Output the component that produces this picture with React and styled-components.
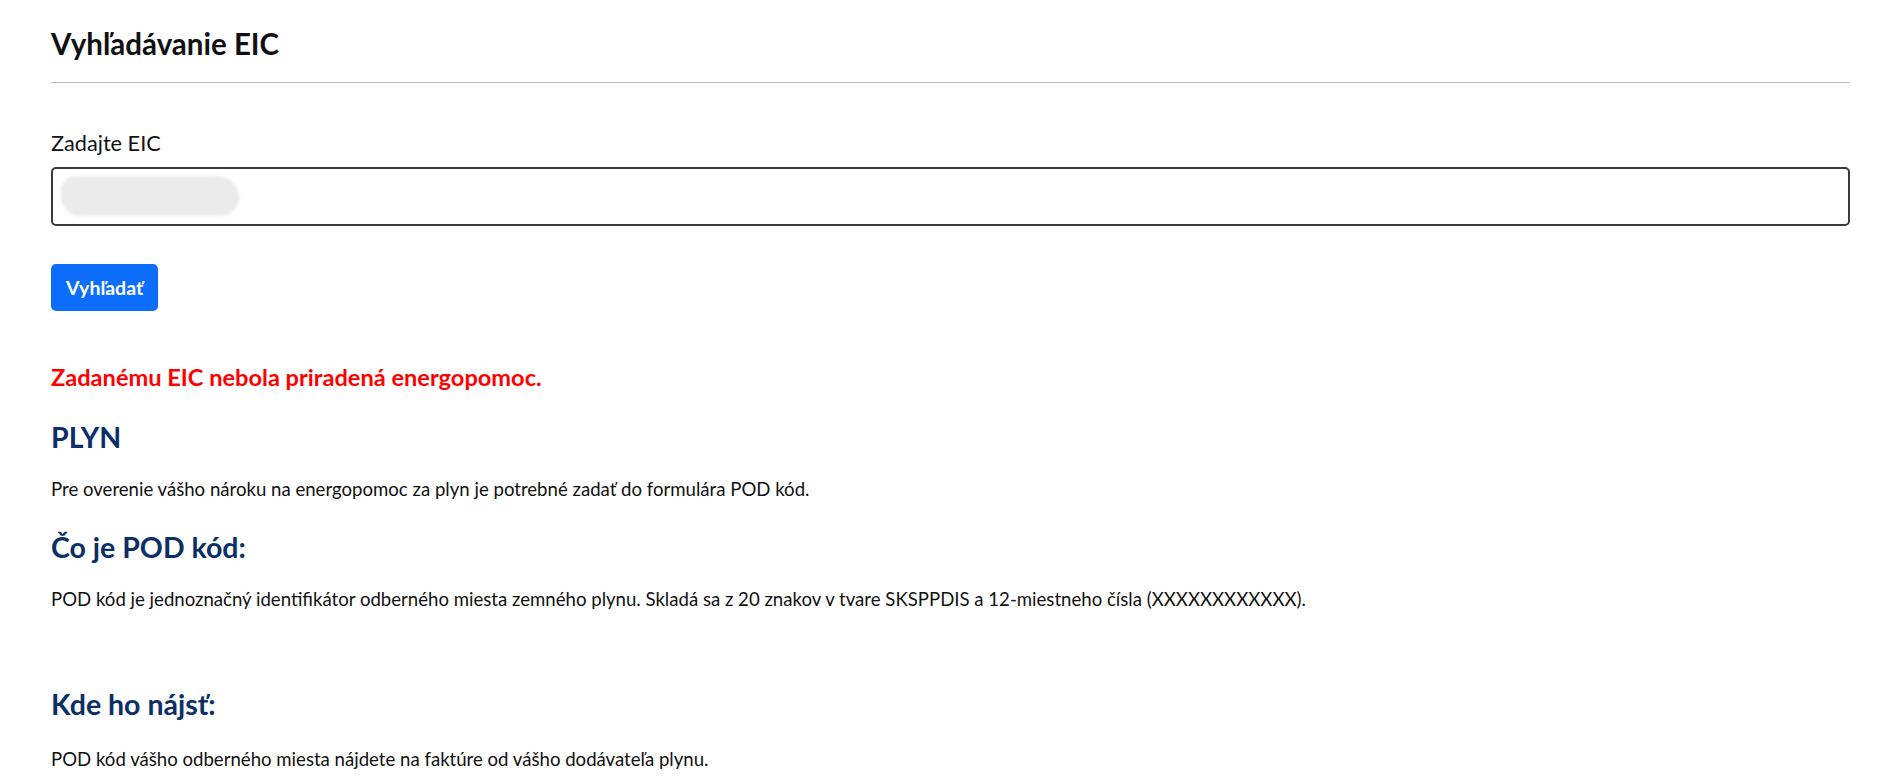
import React, { useState } from 'react'
import styled, { createGlobalStyle } from 'styled-components'

const GlobalStyle = createGlobalStyle`
  * { box-sizing: border-box; }
  body {
    margin: 0;
    background: #fff;
    font-family: Lato, "Open Sans", sans-serif;
    color: #111;
  }
`

const App = () => {

    const [eic, setEic] = useState('')

    const submitHandler = (e) => {
        e.preventDefault()
    }

    return (
        <Page>
            <GlobalStyle />
            <Title>Vyhľadávanie EIC</Title>
            <Divider />

            <form onSubmit={submitHandler}>
                <Label htmlFor="eic_field">Zadajte EIC</Label>
                <InputWrap>
                    <Input
                        id="eic_field"
                        type="text"
                        value={eic}
                        onChange={(e) => setEic(e.target.value)}
                    />
                    <Redacted />
                </InputWrap>

                <SearchButton type="submit">Vyhľadať</SearchButton>
            </form>

            <ErrorText>Zadanému EIC nebola priradená energopomoc.</ErrorText>

            <Heading>PLYN</Heading>
            <Text>Pre overenie vášho nároku na energopomoc za plyn je potrebné zadať do formulára POD kód.</Text>

            <Heading>Čo je POD kód:</Heading>
            <Text>POD kód je jednoznačný identifikátor odberného miesta zemného plynu. Skladá sa z 20 znakov v tvare SKSPPDIS a 12-miestneho čísla (XXXXXXXXXXXX).</Text>

            <Heading $gap="72px">Kde ho nájsť:</Heading>
            <Text $gap="22px">POD kód vášho odberného miesta nájdete na faktúre od vášho dodávateľa plynu.</Text>
        </Page>
    )
}

export default App


const Page = styled.div`
    padding: 24px 50px 20px 51px;
`

const Title = styled.h1`
    margin: 0;
    font-size: 29.5px;
    font-weight: 700;
    line-height: 40px;
`

const Divider = styled.hr`
    margin: 18px 0 46px;
    border: none;
    border-top: 1px solid #bdbdbd;
`

const Label = styled.label`
    display: block;
    font-size: 21.7px;
    line-height: 28px;
    margin-bottom: 10px;
`

const InputWrap = styled.div`
    position: relative;
`

const Input = styled.input`
    display: block;
    width: 100%;
    height: 59px;
    border: 2px solid #3b3b3b;
    border-radius: 5px;
    padding: 0 12px;
    font-size: 20px;
    font-family: inherit;
    outline: none;
`

const Redacted = styled.div`
    position: absolute;
    left: 10px;
    top: 9px;
    width: 178px;
    height: 40px;
    background: #ebebeb;
    border-radius: 16px 24px 20px 22px;
    filter: blur(1.5px);
    pointer-events: none;
`

const SearchButton = styled.button`
    margin-top: 38px;
    height: 47px;
    padding: 0 15px;
    border: none;
    border-radius: 5px;
    background: #0d6efd;
    color: #fff;
    font-family: inherit;
    font-size: 19.5px;
    font-weight: 700;
    cursor: pointer;
`

const ErrorText = styled.p`
    margin: 51px 0 0;
    color: #ff0000;
    font-size: 23.6px;
    font-weight: 700;
    line-height: 30px;
`

const Heading = styled.h2`
    margin: ${p => p.$gap || '25px'} 0 0;
    color: #0b2f66;
    font-size: 28.5px;
    font-weight: 700;
    line-height: 40px;
`

const Text = styled.p`
    margin: ${p => p.$gap || '19px'} 0 0;
    font-size: 18.6px;
    line-height: 26px;
`
